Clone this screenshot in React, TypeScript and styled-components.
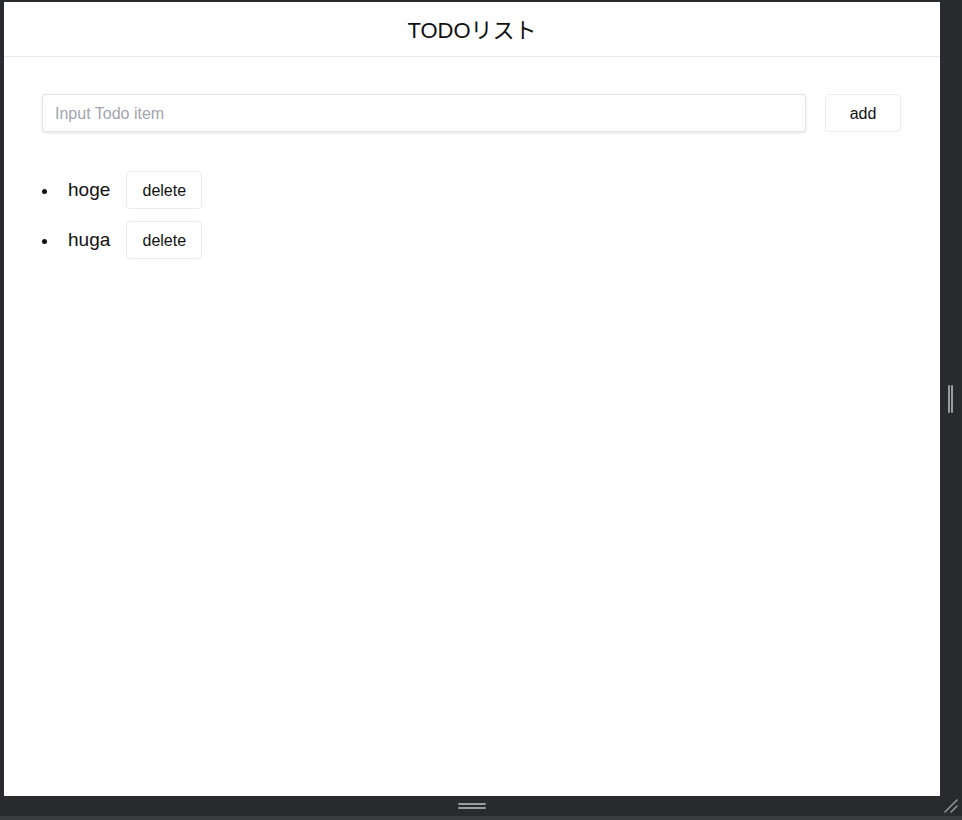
import React, { useState } from 'react';
import styled, { createGlobalStyle } from 'styled-components';

const GlobalStyle = createGlobalStyle`
  html, body {
    margin: 0;
    padding: 0;
    background: #292a2d;
  }
  body {
    font-family: "Liberation Sans", "Noto Sans CJK JP", Arial, sans-serif;
    color: #111;
  }
`;

const Frame = styled.div`
  box-sizing: border-box;
  width: 962px;
  height: 820px;
  padding: 2px 0 0 4px;
  display: grid;
  grid-template-columns: 936px 22px;
  grid-template-rows: 794px 20px 4px;
  background: #292a2d;
`;

const Page = styled.div`
  background: #fff;
  display: flex;
  flex-direction: column;
  overflow: hidden;
`;

const SideBar = styled.div`
  display: flex;
  align-items: center;
  justify-content: center;
  gap: 1px;
  padding-right: 1px;
`;

const Grip = styled.span<{ vertical?: boolean }>`
  display: block;
  background: #9b9c9e;
  border-radius: 1px;
  width: ${p => (p.vertical ? '2px' : '28px')};
  height: ${p => (p.vertical ? '28px' : '2px')};
`;

const BottomHandle = styled.div`
  display: flex;
  flex-direction: column;
  align-items: center;
  justify-content: center;
  gap: 2px;
`;

const Corner = styled.div`
  display: flex;
  align-items: center;
  justify-content: center;
`;

const BottomEdge = styled.div`
  grid-column: 1 / span 2;
  margin-left: -4px;
  background: #3a3b3e;
`;

const Header = styled.header`
  box-sizing: border-box;
  height: 55px;
  padding-bottom: 3px;
  flex-shrink: 0;
  display: flex;
  align-items: center;
  justify-content: center;
  border-bottom: 1px solid #e9e9e9;
  font-size: 22px;
  color: #111;
`;

const Main = styled.main`
  padding: 37px 39px 0 38px;
`;

const Form = styled.div`
  display: flex;
  align-items: center;
  gap: 19px;
`;

const TextInput = styled.input`
  flex: 1;
  box-sizing: border-box;
  height: 38px;
  padding: 1px 12px 0;
  border: 1px solid #e3e3e3;
  border-radius: 4px;
  box-shadow: 0 1px 3px rgba(0, 0, 0, 0.12);
  font-family: inherit;
  font-size: 16px;
  color: #222;
  outline: none;

  &::placeholder {
    color: #a1a5ae;
  }
`;

const Button = styled.button`
  box-sizing: border-box;
  width: 76px;
  height: 38px;
  padding: 2px 0 0;
  background: #fff;
  border: 1px solid #ececec;
  border-radius: 4px;
  font-family: inherit;
  font-size: 16px;
  color: #111;
  cursor: pointer;
`;

const List = styled.ul`
  list-style: none;
  margin: 39px 0 0;
  padding: 0;
  display: flex;
  flex-direction: column;
  gap: 12px;
`;

const Item = styled.li`
  display: flex;
  align-items: center;
`;

const Dot = styled.span`
  width: 5px;
  height: 5px;
  border-radius: 50%;
  background: #111;
  margin: 2px 21px 0 0;
`;

const ItemText = styled.span`
  font-size: 19px;
  margin-right: 16px;
  color: #111;
`;

const App = () => {
  const [text, setText] = useState('');
  const [todos, setTodos] = useState<string[]>(['hoge', 'huga']);

  const onClickAdd = () => {
    if (!text) return;
    setTodos([...todos, text]);
    setText('');
  };

  const onClickDelete = (index: number) => {
    setTodos(todos.filter((_, i) => i !== index));
  };

  return (
    <>
      <GlobalStyle />
      <Frame>
        <Page>
          <Header>TODOリスト</Header>
          <Main>
            <Form>
              <TextInput
                placeholder="Input Todo item"
                value={text}
                onChange={e => setText(e.target.value)}
              />
              <Button onClick={onClickAdd}>add</Button>
            </Form>
            <List>
              {todos.map((todo, i) => (
                <Item key={i}>
                  <Dot />
                  <ItemText>{todo}</ItemText>
                  <Button onClick={() => onClickDelete(i)}>delete</Button>
                </Item>
              ))}
            </List>
          </Main>
        </Page>
        <SideBar>
          <Grip vertical />
          <Grip vertical />
        </SideBar>
        <BottomHandle>
          <Grip />
          <Grip />
        </BottomHandle>
        <Corner>
          <svg width="14" height="14" viewBox="0 0 14 14">
            <path d="M1 13L13 1M7 13L13 7" stroke="#8f9092" strokeWidth="1.6" strokeLinecap="round" />
          </svg>
        </Corner>
        <BottomEdge />
      </Frame>
    </>
  );
};

export default App;
